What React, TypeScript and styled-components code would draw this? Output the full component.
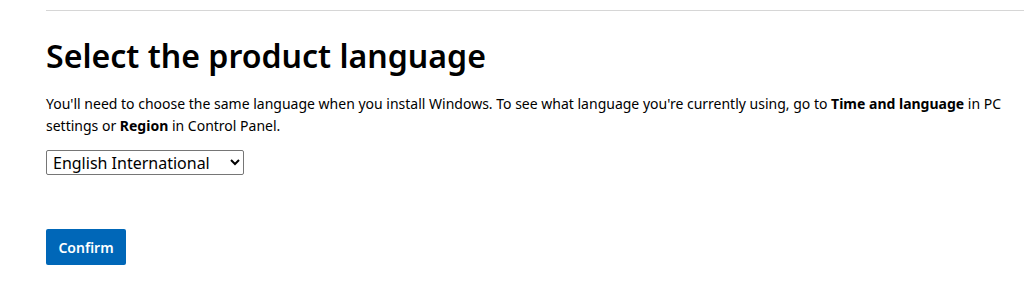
import styled, { createGlobalStyle } from "styled-components";

const GlobalStyle = createGlobalStyle`
  body {
    margin: 0;
    background: #ffffff;
    font-family: "Noto Sans", "Open Sans", sans-serif;
    color: #000000;
  }
`;

const Page = styled.main`
  padding: 0 8px 0 46px;
`;

const Divider = styled.hr`
  margin: 10px -8px 0 0;
  border: 0;
  border-top: 1px solid #d6d6d6;
  height: 0;
`;

const Heading = styled.h1`
  margin: 19px 0 0;
  font-size: 32.1px;
  font-weight: 600;
  line-height: 52px;
`;

const Lead = styled.p`
  margin: 11px 0 0;
  font-size: 14px;
  line-height: 22px;

  b {
    font-weight: 700;
  }
`;

const LanguageSelect = styled.select`
  display: block;
  margin-top: 13px;
  width: 198px;
  height: 25px;
  padding: 0 2px;
  font-family: "Noto Sans", sans-serif;
  font-size: 16px;
  color: #000;
  background: #fff;
  border: 1px solid #767676;
  border-radius: 2px;
`;

const ConfirmButton = styled.button`
  display: block;
  margin-top: 54px;
  width: 80px;
  height: 36px;
  border: 0;
  border-radius: 2px;
  background: #0067b8;
  color: #fff;
  font-family: "Noto Sans", sans-serif;
  font-size: 14px;
  font-weight: 600;
`;

export default function App() {
  return (
    <>
      <GlobalStyle />
      <Page>
        <Divider />
        <Heading>Select the product language</Heading>
        <Lead>
          You'll need to choose the same language when you install Windows. To see what language
          you're currently using, go to <b>Time and language</b> in PC settings or <b>Region</b> in
          Control Panel.
        </Lead>
        <LanguageSelect defaultValue="en-gb">
          <option value="en-gb">English International</option>
          <option value="en-us">English (United States)</option>
        </LanguageSelect>
        <ConfirmButton type="button">Confirm</ConfirmButton>
      </Page>
    </>
  );
}
